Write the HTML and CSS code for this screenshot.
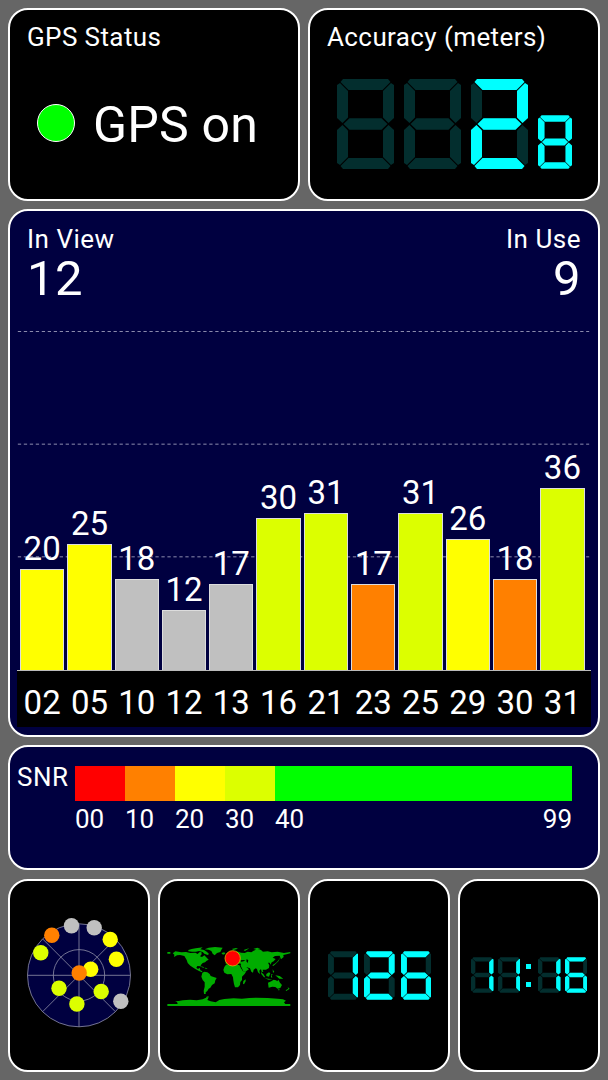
FILE: index.html
```html
<!DOCTYPE html>
<html lang="en">
<head>
    <meta charset="UTF-8">
    <meta name="viewport" content="width=device-width, initial-scale=1.0">
    <title>GPS Status</title>
    <link rel="stylesheet" href="styles.css">
</head>
<body>
    <!-- Seven segment shapes shared by all displays -->
    <svg class="defs">
        <defs>
            <path id="seg-a" d="M6 0H51L53.5 3L45.5 11H11.5L3.5 3Z"/>
            <path id="seg-b" d="M57 6V39L51.5 44L46 38.5V12L54 4Z"/>
            <path id="seg-c" d="M57 84V51L51.5 46L46 51.5V78L54 86Z"/>
            <path id="seg-d" d="M6 90H51L53.5 87L45.5 79H11.5L3.5 87Z"/>
            <path id="seg-e" d="M0 84V51L5.5 46L11 51.5V78L3 86Z"/>
            <path id="seg-f" d="M0 6V39L5.5 44L11 38.5V12L3 4Z"/>
            <path id="seg-g" d="M6.5 45L12.5 39.3H44.5L50.5 45L44.5 50.7H12.5Z"/>
            <g id="d1"><use href="#seg-b"/><use href="#seg-c"/></g>
            <g id="d2"><use href="#seg-a"/><use href="#seg-b"/><use href="#seg-g"/><use href="#seg-e"/><use href="#seg-d"/></g>
            <g id="d6"><use href="#seg-a"/><use href="#seg-f"/><use href="#seg-g"/><use href="#seg-e"/><use href="#seg-c"/><use href="#seg-d"/></g>
            <g id="d8"><use href="#d6"/><use href="#seg-b"/></g>
        </defs>
    </svg>

    <div class="container">
        <div class="row top">
            <div class="card">
                <h2>GPS Status</h2>
                <div class="status"><span class="led"></span><span class="status-text">GPS on</span></div>
            </div>
            <div class="card">
                <h2>Accuracy (meters)</h2>
                <div class="digits accuracy">
                    <svg viewBox="0 0 57 90"><use class="off" href="#d8"/></svg>
                    <svg viewBox="0 0 57 90"><use class="off" href="#d8"/></svg>
                    <svg viewBox="0 0 57 90"><use class="off" href="#d8"/><use href="#d2"/></svg>
                    <svg class="small" viewBox="0 0 57 90"><use href="#d8"/></svg>
                </div>
            </div>
        </div>

        <div class="card chart">
            <div class="counts">
                <div>In View<strong>12</strong></div>
                <div class="right">In Use<strong>9</strong></div>
            </div>
            <div class="plot">
                <svg class="lines" viewBox="0 0 573 340">
                    <path d="M0 .5H573M0 113.5H573M0 226.5H573"/>
                </svg>
                <div class="bars">
                    <div class="col"><span>20</span><div class="bar yellow" style="height: 101px"></div></div>
                    <div class="col"><span>25</span><div class="bar yellow" style="height: 126px"></div></div>
                    <div class="col"><span>18</span><div class="bar gray" style="height: 91px"></div></div>
                    <div class="col"><span>12</span><div class="bar gray" style="height: 60.5px"></div></div>
                    <div class="col"><span>17</span><div class="bar gray" style="height: 86px"></div></div>
                    <div class="col"><span>30</span><div class="bar lime" style="height: 152px"></div></div>
                    <div class="col"><span>31</span><div class="bar lime" style="height: 157px"></div></div>
                    <div class="col"><span>17</span><div class="bar orange" style="height: 86px"></div></div>
                    <div class="col"><span>31</span><div class="bar lime" style="height: 157px"></div></div>
                    <div class="col"><span>26</span><div class="bar yellow" style="height: 131px"></div></div>
                    <div class="col"><span>18</span><div class="bar orange" style="height: 91px"></div></div>
                    <div class="col"><span>36</span><div class="bar lime" style="height: 182px"></div></div>
                </div>
            </div>
            <div class="ids">
                <span>02</span><span>05</span><span>10</span><span>12</span><span>13</span><span>16</span><span>21</span><span>23</span><span>25</span><span>29</span><span>30</span><span>31</span>
            </div>
        </div>

        <div class="card snr">
            <span class="snr-label">SNR</span>
            <div class="scale">
                <div class="step"><div class="red"></div>00</div>
                <div class="step"><div class="orange"></div>10</div>
                <div class="step"><div class="yellow"></div>20</div>
                <div class="step"><div class="lime"></div>30</div>
                <div class="step wide"><div class="green"></div><p><span>40</span><span>99</span></p></div>
            </div>
        </div>

        <div class="row bottom">
            <div class="card tile">
                <svg class="sky" viewBox="9 910 140 130">
                    <circle class="disc" cx="79" cy="975.3" r="51.5"/>
                    <circle class="ring" cx="79" cy="975.3" r="25.7"/>
                    <path class="ring" d="M27.5 975.3H130.5M79 923.8V1026.8M42.6 938.9L115.4 1011.7M115.4 938.9L42.6 1011.7"/>
                    <g class="gray"><circle cx="71.5" cy="925.8" r="7.7"/><circle cx="94.2" cy="927.8" r="7.7"/><circle cx="120.8" cy="1001.3" r="7.7"/></g>
                    <g class="yellow"><circle cx="110.2" cy="939.5" r="7.7"/><circle cx="116.4" cy="959.3" r="7.7"/><circle cx="90.7" cy="969.3" r="7.7"/></g>
                    <g class="lime"><circle cx="40.8" cy="952.7" r="7.7"/><circle cx="59" cy="988.3" r="7.7"/><circle cx="76.9" cy="1004" r="7.7"/><circle cx="101.2" cy="991.5" r="7.7"/></g>
                    <g class="orange"><circle cx="51.8" cy="935.3" r="7.7"/><circle cx="79.2" cy="973" r="7.7"/></g>
                </svg>
            </div>
            <div class="card tile">
                <svg class="map" viewBox="20 45 372 190">
                    <!-- Americas and Greenland -->
                    <path d="M21 66H30V71H21ZM37 70L45 64L63 67L77 66L90 69L105 68L112 72L117 67L123 66L124 73L119 79L125 81L132 76L137 81L145 89L139 92L134 97L127 99L121 106L122 109L111 108L108 113L113 117L118 113L120 121L126 124L125 127L116 123L105 117L99 113L90 107L82 99L79 90L72 78L59 75L50 76L41 81L42 74Z"/>
                    <path d="M84 60L94 57L106 55L117 53L127 52L120 58L131 60L140 66L146 72L142 75L132 71L127 66L116 63L107 65L95 65L84 64ZM133 58L145 53L164 51L187 53L184 58L180 66L170 69L163 76L157 71L153 63L145 59ZM118 109L128 110L133 115L125 112ZM134 113L142 115L136 117Z"/>
                    <path d="M126 128L132 125L141 127L148 132L151 138L169 144L165 151L163 160L155 165L150 173L145 176L141 183L136 187L136 192L131 192L130 182L133 170L133 157L127 150L123 140ZM137 201L145 198L144 202L139 205Z"/>
                    <!-- Africa and Madagascar -->
                    <path d="M197 104L207 101L216 100L218 104L225 104L237 105L242 115L248 124L258 124L253 132L245 140L245 150L240 156L239 165L233 172L224 172L221 162L219 151L218 142L213 132L201 133L192 128L189 120L192 111ZM249 153L256 148L256 154L251 163L248 161Z"/>
                    <!-- Europe and Asia -->
                    <path d="M183 69L192 67L195 71L188 74ZM196 84L202 78L205 84L203 88L197 90ZM196 94L203 91L209 85L217 80L214 75L220 68L229 64L242 68L253 69L262 65L273 67L280 62L293 57L302 60L308 65L322 64L334 67L352 65L371 69L390 66L390 70L379 73L369 75L370 81L362 88L358 77L344 78L337 83L346 87L340 94L334 97L331 104L328 98L323 98L327 106L326 114L317 119L307 119L309 126L304 125L302 117L297 122L299 132L293 127L290 117L286 115L280 119L278 128L273 125L269 115L258 111L266 118L257 124L249 124L244 113L241 107L242 101L232 100L229 96L222 93L225 103L219 97L214 93L208 95L203 101L196 101ZM214 57L227 54L233 56L220 60ZM250 60L261 56L267 55L254 63ZM279 57L291 53L300 57L288 59Z"/>
                    <path class="sea" d="M241 91L255 90L250 94L242 95ZM259 87L264 91L262 99L258 94Z"/>
                    <!-- Islands and Australia -->
                    <path d="M349 97L355 90L360 80L355 93L345 103L339 108L336 106L343 101ZM337 118L342 126L338 128ZM302 126L309 132L315 142L311 142L303 132ZM318 132L326 127L330 130L326 140L318 138ZM313 145L329 147L337 148L325 149ZM333 132L338 134L334 136L336 143L332 142ZM345 136L358 138L369 146L357 146L351 141ZM323 158L333 154L340 149L347 151L351 154L354 149L359 158L365 165L360 174L352 176L345 171L336 170L325 173ZM353 178L358 178L356 182ZM382 171L388 176L378 183L376 181L384 176Z"/>
                    <!-- Antarctica -->
                    <path d="M21 222H52L50 216L44 214L55 213L67 211L89 209L109 211L127 208L137 203L145 202L141 210L151 214L166 217L177 210L192 207L220 205L245 206L267 204L287 203L322 204L352 206L368 208L377 212L371 217L375 222H390V228H21Z"/>
                    <circle class="pin" cx="217" cy="85" r="23"/>
                </svg>
            </div>
            <div class="card tile">
                <div class="digits speed">
                    <svg viewBox="0 0 57 90"><use class="off" href="#d8"/><use href="#d1"/></svg>
                    <svg viewBox="0 0 57 90"><use class="off" href="#d8"/><use href="#d2"/></svg>
                    <svg viewBox="0 0 57 90"><use class="off" href="#d8"/><use href="#d6"/></svg>
                </div>
            </div>
            <div class="card tile">
                <div class="digits clock">
                    <svg viewBox="0 0 57 90"><use class="off" href="#d8"/><use href="#d1"/></svg>
                    <svg viewBox="0 0 57 90"><use class="off" href="#d8"/><use href="#d1"/></svg>
                    <div class="colon"><i></i><i></i></div>
                    <svg viewBox="0 0 57 90"><use class="off" href="#d8"/><use href="#d1"/></svg>
                    <svg viewBox="0 0 57 90"><use class="off" href="#d8"/><use href="#d6"/></svg>
                </div>
            </div>
        </div>
    </div>
</body>
</html>
```
FILE: styles.css
```css
* {
    box-sizing: border-box;
}

body {
    margin: 0;
    background-color: #666;
    color: #fff;
    font-family: Roboto, "Liberation Sans", sans-serif;
    font-size: 26px;
}

.defs {
    display: block;
    width: 0;
    height: 0;
}

.container {
    display: flex;
    flex-direction: column;
    gap: 8.5px;
    height: 1080px;
    padding: 8px;
}

.row {
    display: grid;
    gap: 8px;
}

.top {
    grid-template-columns: 1fr 1fr;
    height: 192.5px;
}

.card {
    background-color: #000;
    border: 2px solid #fff;
    border-radius: 20px;
    min-width: 0;
}

h2 {
    margin: 12px 0 0 17px;
    font-size: 26px;
    font-weight: normal;
    line-height: 30px;
    letter-spacing: 0.4px;
    white-space: nowrap;
}

.status {
    display: flex;
    align-items: center;
    gap: 18px;
    margin: 41px 0 0 27px;
    height: 60px;
}

.led {
    width: 38px;
    height: 38px;
    border: 1px solid #fff;
    border-radius: 50%;
    background-color: #0f0;
}

.status-text {
    padding-top: 3px;
    font-size: 50px;
    letter-spacing: 0.2px;
    white-space: nowrap;
}

/* Segment displays */
.digits {
    display: flex;
    fill: #0ff;
}

.digits svg {
    display: block;
}

.off {
    fill: #032e2e;
}

.accuracy {
    align-items: flex-end;
    gap: 10px;
    margin: 27px 0 0 27px;
}

.accuracy svg {
    width: 57px;
    height: 90px;
}

.accuracy .small {
    width: 34px;
    height: 54px;
}

/* Satellite chart */
.chart {
    height: 527.5px;
    padding: 10px 7px 0;
    background-color: #000040;
}

.counts {
    display: flex;
    justify-content: space-between;
    height: 110px;
    padding: 3px 10px 0;
    line-height: 30px;
    letter-spacing: 0.5px;
}

.counts strong {
    display: block;
    font-size: 49px;
    font-weight: normal;
    line-height: 50px;
}

.right {
    text-align: right;
}

.plot {
    display: grid;
    height: 340px;
    border-bottom: 1px solid #bbb;
}

.lines, .bars {
    grid-area: 1 / 1;
    width: 573px;
    height: 339px;
}

.lines path {
    fill: none;
    stroke: #8d8daf;
    stroke-dasharray: 3.3 2.7;
}

.bars, .ids {
    display: grid;
    grid-template-columns: repeat(12, 44.3px);
    column-gap: 3px;
    padding-left: 3px;
    font-size: 33px;
    text-align: center;
}

.col {
    display: flex;
    flex-direction: column;
    justify-content: flex-end;
    line-height: 40px;
}

.bar {
    border: 1px solid #ddd;
    border-bottom: none;
}

.ids {
    height: 56px;
    background-color: #000;
    line-height: 63px;
}

.red {
    background-color: #f00;
}

.orange {
    background-color: #ff8000;
    fill: #ff8000;
}

.yellow {
    background-color: #ff0;
    fill: #ff0;
}

.lime {
    background-color: #dcff00;
    fill: #dcff00;
}

.green {
    background-color: #0f0;
}

.gray {
    background-color: #c0c0c0;
    fill: #c0c0c0;
}

.snr {
    display: flex;
    height: 125px;
    padding: 19px 7px 0;
    background-color: #000040;
    line-height: 37px;
}

.snr-label {
    width: 58px;
    line-height: 22px;
    letter-spacing: 0.5px;
}

.scale {
    display: flex;
}

.step {
    width: 50px;
}

.step div {
    height: 35px;
}

.wide {
    width: 297px;
}

.wide p {
    display: flex;
    justify-content: space-between;
    margin: 0;
}

/* Bottom tiles */
.bottom {
    grid-template-columns: repeat(4, 1fr);
    height: 193px;
}

.tile {
    display: flex;
    align-items: center;
    justify-content: center;
}

.sky {
    flex: none;
    width: 140px;
    height: 130px;
}

.disc, .ring {
    fill: none;
    stroke: #9090a8;
    stroke-width: 0.8;
}

.disc {
    fill: #000040;
}

.map {
    flex: none;
    width: 124px;
    height: 63.3px;
    margin-top: 3px;
    fill: #00ac00;
}

.sea {
    fill: #000;
}

.pin {
    fill: #f00;
    stroke: #e0b000;
    stroke-width: 2.5;
}

.speed {
    gap: 5.7px;
    margin-left: 1px;
}

.speed svg {
    width: 30.7px;
    height: 49px;
}

.clock {
    gap: 4px;
}

.clock svg {
    width: 22.5px;
    height: 36px;
}

.colon {
    display: flex;
    flex-direction: column;
    justify-content: space-between;
    width: 10px;
    padding: 6.5px 2px;
}

.colon i {
    width: 4.7px;
    height: 5px;
    background-color: #0ff;
}
```
